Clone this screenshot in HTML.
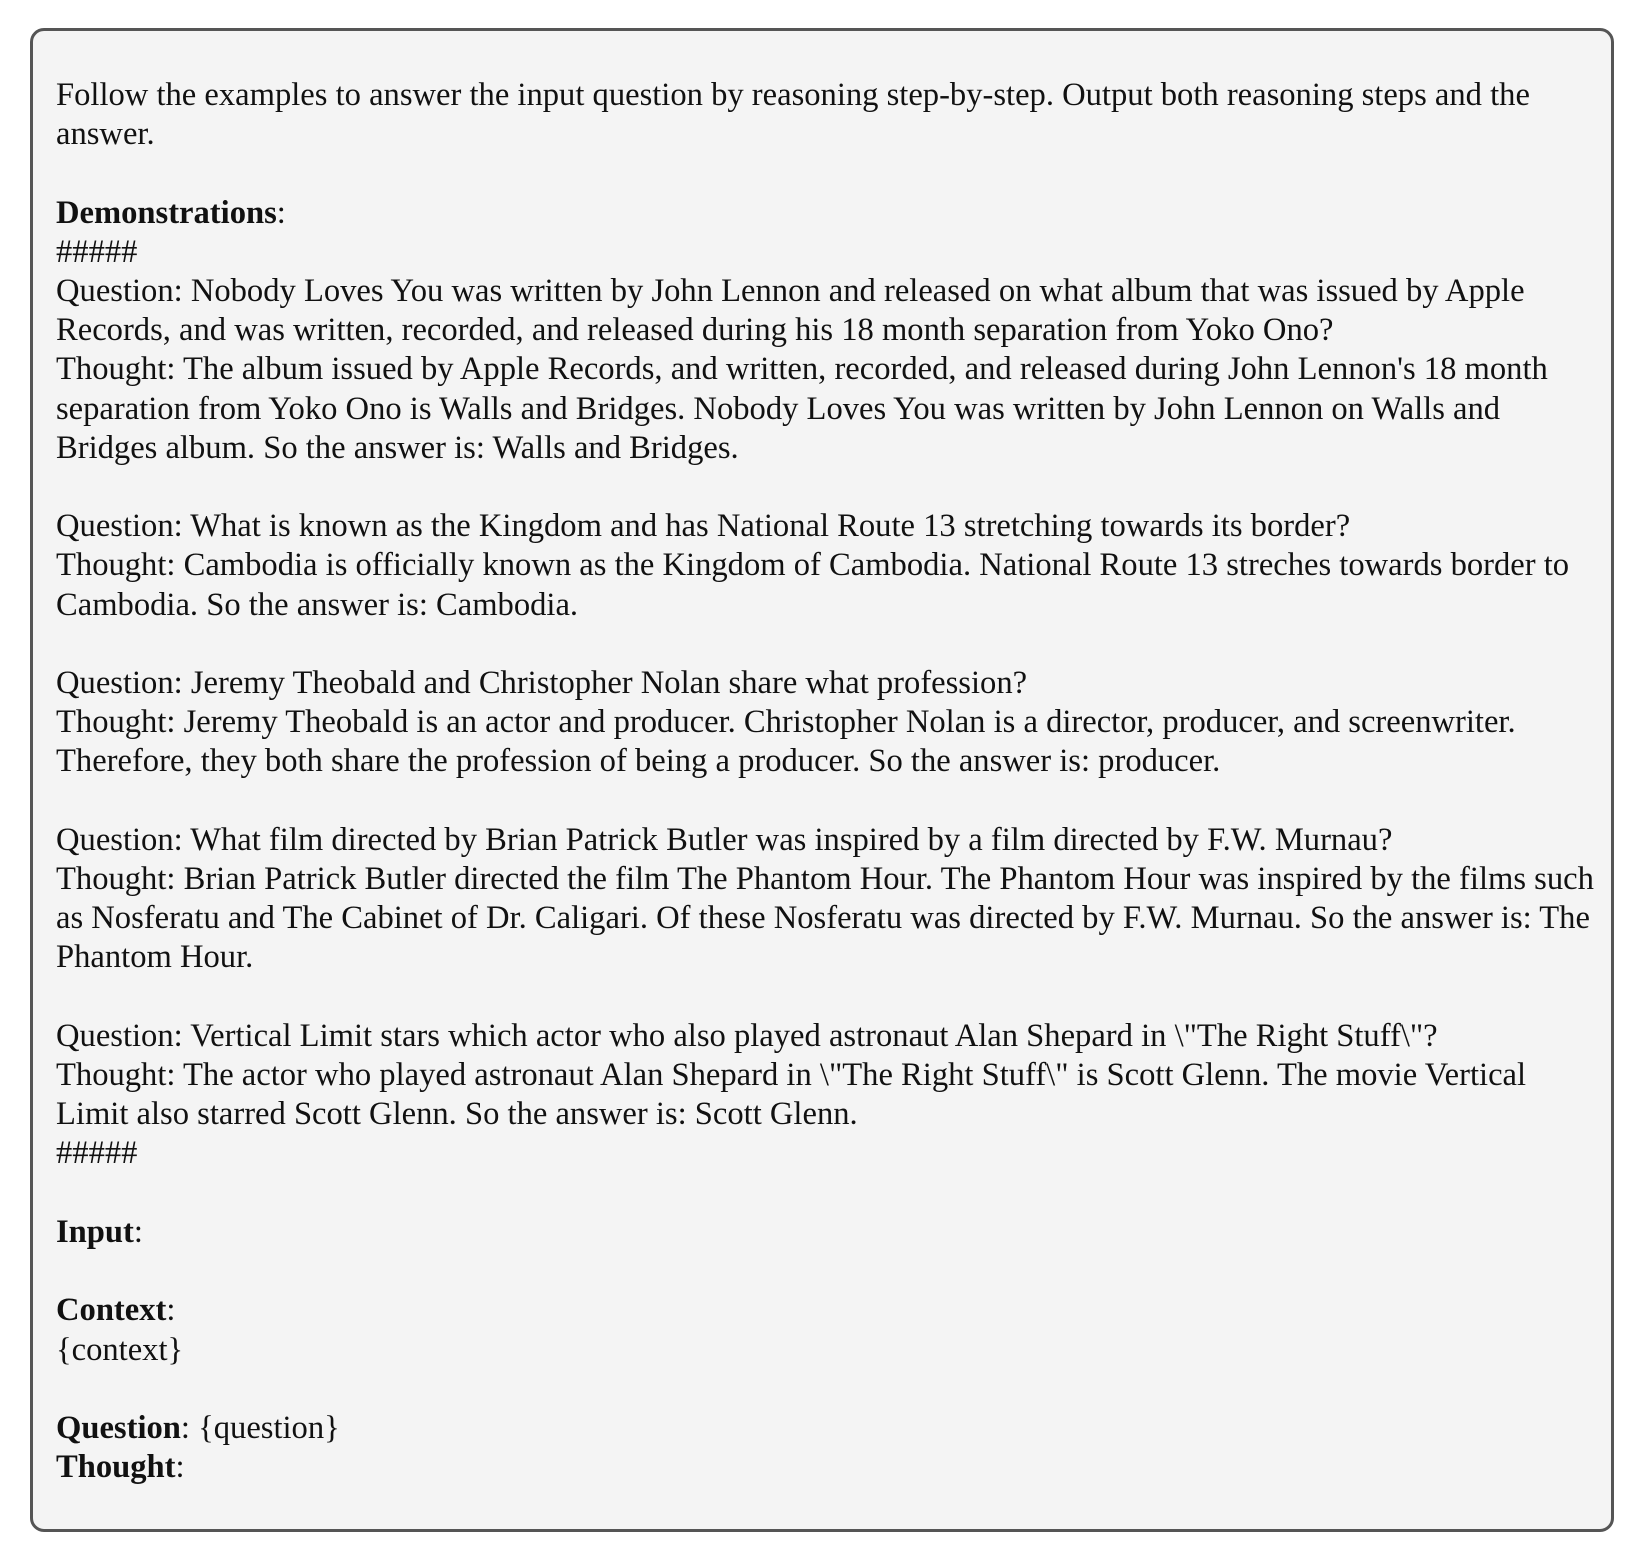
<!DOCTYPE html>
<html><head><meta charset="utf-8"><style>
html,body{margin:0;padding:0;background:#fff;width:1644px;height:1559px;overflow:hidden}
.box{position:absolute;left:30px;top:28px;width:1578px;height:1498px;border:3px solid #555;border-radius:14px;background:#f4f4f4;box-sizing:content-box}
.t{position:absolute;left:23px;top:45px;font-family:"Liberation Serif",serif;font-size:32.6px;line-height:39.2px;color:#111;white-space:nowrap}
b{font-weight:bold}
</style></head><body>
<div class="box"><div class="t">
Follow the examples to answer the input question by reasoning step-by-step. Output both reasoning steps and the<br>
answer.<br><br>
<b>Demonstrations</b>:<br>
#####<br>
Question: Nobody Loves You was written by John Lennon and released on what album that was issued by Apple<br>
Records, and was written, recorded, and released during his 18 month separation from Yoko Ono?<br>
Thought: The album issued by Apple Records, and written, recorded, and released during John Lennon's 18 month<br>
separation from Yoko Ono is Walls and Bridges. Nobody Loves You was written by John Lennon on Walls and<br>
Bridges album. So the answer is: Walls and Bridges.<br><br>
Question: What is known as the Kingdom and has National Route 13 stretching towards its border?<br>
Thought: Cambodia is officially known as the Kingdom of Cambodia. National Route 13 streches towards border to<br>
Cambodia. So the answer is: Cambodia.<br><br>
Question: Jeremy Theobald and Christopher Nolan share what profession?<br>
Thought: Jeremy Theobald is an actor and producer. Christopher Nolan is a director, producer, and screenwriter.<br>
Therefore, they both share the profession of being a producer. So the answer is: producer.<br><br>
Question: What film directed by Brian Patrick Butler was inspired by a film directed by F.W. Murnau?<br>
Thought: Brian Patrick Butler directed the film The Phantom Hour. The Phantom Hour was inspired by the films such<br>
as Nosferatu and The Cabinet of Dr. Caligari. Of these Nosferatu was directed by F.W. Murnau. So the answer is: The<br>
Phantom Hour.<br><br>
Question: Vertical Limit stars which actor who also played astronaut Alan Shepard in \"The Right Stuff\"?<br>
Thought: The actor who played astronaut Alan Shepard in \"The Right Stuff\" is Scott Glenn. The movie Vertical<br>
Limit also starred Scott Glenn. So the answer is: Scott Glenn.<br>
#####<br><br>
<b>Input</b>:<br><br>
<b>Context</b>:<br>
{context}<br><br>
<b>Question</b>: {question}<br>
<b>Thought</b>:
</div></div>
</body></html>
